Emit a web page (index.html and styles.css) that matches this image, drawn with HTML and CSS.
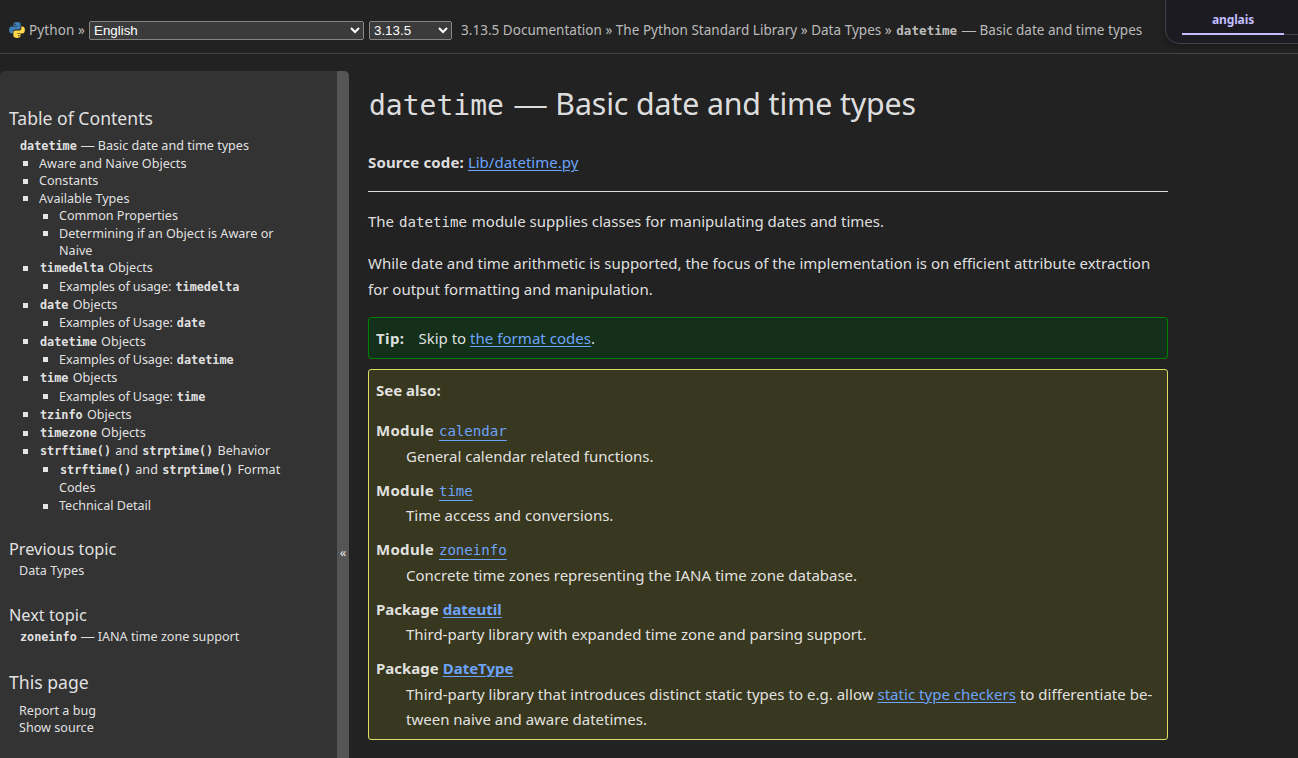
FILE: index.html
```html
<!DOCTYPE html>
<html lang="en">
<head>
<meta charset="utf-8">
<title>datetime — Basic date and time types</title>
<link rel="stylesheet" href="styles.css">
</head>
<body>
<header class="related">
  <svg class="logo" viewBox="0 0 16 16" width="16" height="16">
    <path fill="#3f7fb5" d="M7.9.1C5.600.1 4.500.8 4.500 2.200V4H8.200V4.600H2.600C1 4.600.1 6 .1 8C.1 10 1 11.400 2.400 11.400H3.900V9.600C3.900 8.300 4.900 7.400 6.200 7.400H9.800C10.900 7.400 11.600 6.600 11.600 5.600V2.200C11.600.8 10.200.1 7.900.1Z"/>
    <path fill="#ffd94a" d="M8.100 15.900C10.400 15.900 11.500 15.200 11.500 13.800V12H7.800V11.400H13.400C15 11.400 15.900 10 15.900 8C15.900 6 15 4.600 13.600 4.600H12.300V6.400C12.300 7.700 11.100 8.600 9.800 8.600H6.200C5.100 8.600 4.400 9.400 4.400 10.400V13.800C4.400 15.200 5.800 15.900 8.100 15.900Z"/>
    <circle cx="6.100" cy="2.200" r=".75" fill="#222"/><circle cx="9.900" cy="13.800" r=".75" fill="#222"/>
  </svg>
  <span class="brand">Python »</span>
  <select class="lang"><option>English</option></select>
  <select class="version"><option>3.13.5</option></select>
  <nav class="crumbs">3.13.5 Documentation » The Python Standard Library » Data Types » <code>datetime</code> <span class="dash">—</span> Basic date and time types</nav>
</header>
<aside class="translate"><div class="tabs"><span class="tab">anglais</span></div></aside>
<div class="document">
  <div class="sidebar">
    <div class="side-body">
      <h3 class="side-title">Table of Contents</h3>
      <div class="toc">
        <div class="row coded"><code>datetime</code> <span class="dash">—</span> Basic date and time types</div>
        <ul>
          <li><div class="row">Aware and Naive Objects</div></li>
          <li><div class="row">Constants</div></li>
          <li><div class="row">Available Types</div>
            <ul>
              <li><div class="row">Common Properties</div></li>
              <li><div class="row">Determining if an Object is Aware or<br>Naive</div></li>
            </ul></li>
          <li><div class="row coded"><code>timedelta</code> Objects</div>
            <ul><li><div class="row coded usage">Examples of usage: <code>timedelta</code></div></li></ul></li>
          <li><div class="row coded"><code>date</code> Objects</div>
            <ul><li><div class="row coded usage">Examples of Usage: <code>date</code></div></li></ul></li>
          <li><div class="row coded"><code>datetime</code> Objects</div>
            <ul><li><div class="row coded usage">Examples of Usage: <code>datetime</code></div></li></ul></li>
          <li><div class="row coded"><code>time</code> Objects</div>
            <ul><li><div class="row coded usage">Examples of Usage: <code>time</code></div></li></ul></li>
          <li><div class="row coded"><code>tzinfo</code> Objects</div></li>
          <li><div class="row coded"><code>timezone</code> Objects</div></li>
          <li><div class="row coded"><code>strftime()</code> and <code>strptime()</code> Behavior</div>
            <ul>
              <li><div class="row coded"><code>strftime()</code> and <code>strptime()</code> Format<br>Codes</div></li>
              <li><div class="row">Technical Detail</div></li>
            </ul></li>
        </ul>
      </div>
      <h4 class="side-sub">Previous topic</h4>
      <div class="topic"><div class="row">Data Types</div></div>
      <h4 class="side-sub next">Next topic</h4>
      <div class="topic"><div class="row coded"><code>zoneinfo</code> <span class="dash">—</span> IANA time zone support</div></div>
      <h3 class="side-title page">This page</h3>
      <div class="topic"><div class="row">Report a bug</div><div class="row">Show source</div></div>
    </div>
    <div class="collapse"><span>«</span></div>
  </div>
  <main class="content">
    <h1><code>datetime</code> <span class="dash">—</span> Basic date and time types</h1>
    <p class="source"><strong>Source code:</strong> <a>Lib/datetime.py</a></p>
    <hr>
    <p class="intro">The <code>datetime</code> module supplies classes for manipulating dates and times.</p>
    <p class="text">While date and time arithmetic is supported, the focus of the implementation is on efficient attribute extraction<br>for output formatting and manipulation.</p>
    <div class="box tip"><strong>Tip:</strong><span>Skip to <a>the format codes</a>.</span></div>
    <div class="box seealso">
      <strong>See also:</strong>
      <dl>
        <dt><span class="kind">Module</span> <a class="mono"><code>calendar</code></a></dt>
        <dd>General calendar related functions.</dd>
        <dt><span class="kind">Module</span> <a class="mono"><code>time</code></a></dt>
        <dd>Time access and conversions.</dd>
        <dt><span class="kind">Module</span> <a class="mono"><code>zoneinfo</code></a></dt>
        <dd>Concrete time zones representing the IANA time zone database.</dd>
        <dt>Package <a>dateutil</a></dt>
        <dd>Third-party library with expanded time zone and parsing support.</dd>
        <dt>Package <a>DateType</a></dt>
        <dd><span class="wide">Third-party library that introduces distinct static types to e.g. allow <a>static type checkers</a> to differentiate be-</span><br>tween naive and aware datetimes.</dd>
      </dl>
    </div>
  </main>
</div>
</body>
</html>
```
FILE: styles.css
```css
* { box-sizing: border-box; }
html { color-scheme: dark; }
body {
  margin: 0;
  height: 758px;
  overflow: hidden;
  background: #222;
  color: rgba(255, 255, 255, .87);
  font: 15px/25.6px "Noto Sans", "Open Sans", sans-serif;
}
code { font-family: "DejaVu Sans Mono", monospace; padding: 0 1px; }
h1, h3, h4, p, ul, dl, dd { margin: 0; font-weight: 400; }
ul { padding: 0; list-style: none; }
a { color: #6da3f9; text-decoration: underline; text-underline-offset: 2px; text-decoration-thickness: 1px; }
.dash { font-family: "Liberation Sans", sans-serif; font-size: 1.06em; line-height: 1; }

.related {
  display: flex;
  align-items: center;
  height: 54px;
  padding: 7px 0 0 9px;
  border-bottom: 1px solid #444;
  color: #bbb;
  font-size: 13.5px;
  white-space: nowrap;
}
.logo { flex: none; margin-right: 4px; }
.brand { width: 60px; padding-top: 2px; letter-spacing: .1px; }
.related select {
  height: 19px;
  margin: 0;
  padding: 0;
  font: 13.333px "Liberation Sans", Arial, sans-serif;
}
.related .lang { width: 275px; }
.related .version { width: 83px; margin-left: 5px; }
.crumbs { margin-left: 9px; padding-top: 2px; letter-spacing: .025px; }
.crumbs code { font-size: 12.6px; font-weight: 700; }

.translate {
  position: absolute;
  top: -12px;
  right: -20px;
  width: 153px;
  height: 56px;
  padding: 11px 0 0 16px;
  background: #1c1b22;
  border: 1px solid #42414d;
  border-radius: 14px;
  box-shadow: 0 2px 6px rgba(0, 0, 0, .35);
}
.tabs { height: 35px; border-bottom: 1px solid #42414d; }
.tab {
  display: block;
  width: 102px;
  height: 35px;
  border-bottom: 2px solid #c2beff;
  color: #c2beff;
  font-size: 12px;
  font-weight: 700;
  line-height: 39px;
  letter-spacing: -.1px;
  text-align: center;
}

.document { display: flex; gap: 19px; padding-top: 17px; }
.sidebar {
  display: flex;
  flex: none;
  width: 349px;
  height: 700px;
  overflow: hidden;
  background: #333;
  border-radius: 5px;
}
.side-body { flex: 1; padding: 35px 0 0 9px; font-size: 12.6px; white-space: nowrap; }
.side-title { font-size: 17.6px; line-height: 24px; margin-bottom: 6.700px; }
.side-sub { font-size: 16.3px; line-height: 22px; margin: 23.800px 0 1.800px; }
.side-sub.next { margin: 24.300px 0 2.200px; }
.side-title.page { margin: 23.500px 0 8px; }
.toc, .topic { padding-left: 10px; }
.toc li { position: relative; padding-left: 20px; }
.toc li::before {
  content: "";
  position: absolute;
  left: 4px;
  top: 6.500px;
  width: 5px;
  height: 5px;
  background: #e4e4e4;
}
.row { line-height: 17.4px; }
.row.coded { line-height: 18.300px; }
.row code { font-size: 11.8px; font-weight: 700; line-height: 1; }
.row.usage { letter-spacing: -.11px; }
.row.usage code { letter-spacing: 0; }
.collapse { width: 12px; background: #555; text-align: center; font-size: 13px; line-height: 20px; padding-top: 471px; }

.content { flex: none; width: 800px; padding-top: 13px; white-space: nowrap; }
h1 { font-size: 30.3px; line-height: 40px; letter-spacing: -.13px; }
h1 code { font-size: 28px; letter-spacing: 0; }
h1 .dash { margin: 0 1px 0 2px; }
.source { margin-top: 24px; }
.source strong { letter-spacing: .15px; }
hr { margin: 15px 0 17.800px; border: 0; border-top: 1px solid #ddd; }
.content p code, dt code { font-size: 14.1px; line-height: 1; }
.text { margin-top: 16px; }
.box { padding: 8px 7px 0; border: 1px solid; border-radius: 3px; }
.tip { display: flex; gap: 14px; height: 42px; margin-top: 14.600px; background: #15301a; border-color: #008000; }
.tip strong { letter-spacing: .4px; }
.tip a { letter-spacing: .04px; }
.seealso { height: 371px; margin-top: 10px; background: #38371f; border-color: #dddd66; }
dl { margin-top: 14.600px; }
dt { font-weight: 700; }
dt code { font-weight: 400; }
.kind { letter-spacing: .3px; }
.wide { letter-spacing: .025px; }
dd { margin-bottom: 8.400px; padding-left: 30px; }
a.mono { text-underline-offset: 4px; }
```
